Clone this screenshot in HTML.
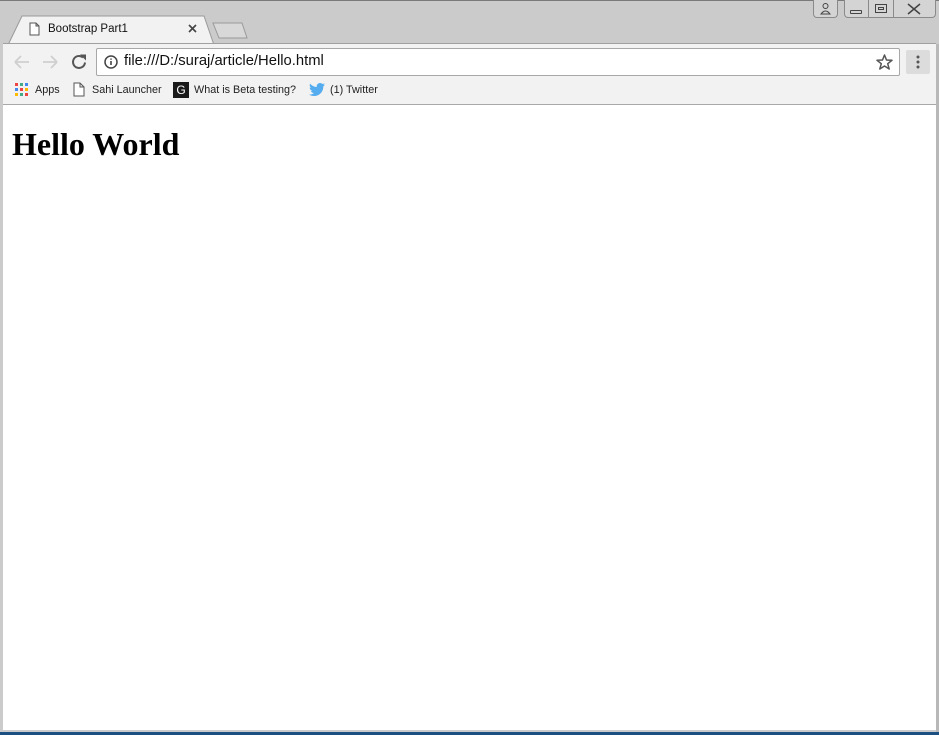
<!DOCTYPE html>
<html><head><meta charset="utf-8"><style>
*{margin:0;padding:0;box-sizing:border-box}
body{width:939px;height:735px;overflow:hidden;background:#cbcbcb;position:relative;font-family:"Liberation Sans",Arial,sans-serif}
.abs{position:absolute}
#top{left:0;top:0;width:939px;height:44px;background:#cbcbcb;border-top:1px solid #7a7a7a}
#toolbar{left:3px;top:43px;width:933px;height:62px;background:#f2f2f2;border-top:1px solid #a0a0a0}
#content{left:3px;top:104px;width:933px;height:626px;background:#fff;border-top:1px solid #a8a8a8}
#bottom{left:0;top:732px;width:939px;height:3px;background:#1c4f82}
h1{position:absolute;left:12px;top:126px;font-family:"Liberation Serif",serif;font-size:32px;font-weight:bold;color:#000}
.ctrl{top:0;height:18px;border:1px solid #8a8a8a;border-top:none;background:#d4d4d4;border-radius:0 0 4px 4px}
.bm{top:84px;font-size:10.8px;color:#222}
</style></head><body>
<div id="top" class="abs"></div>
<svg class="abs" style="left:0;top:0" width="260" height="46">
<path d="M8 45 L22 16 L204 16 L214 45 Z" fill="#f2f2f2" stroke="#9a9a9a"/>
<path d="M213 23 L242 23 L247 38 L219 38 Z" fill="#d8d8d8" stroke="#9a9a9a"/>
<path d="M30 23 h6 l3 3 v9 h-9 z M36 23 v3 h3" fill="#fff" stroke="#555" stroke-width="1"/>
<path d="M189 25 l7 7 M196 25 l-7 7" stroke="#444" stroke-width="1.6"/>
</svg>
<div class="abs" style="left:48px;top:23px;font-size:11.5px;color:#111">Bootstrap Part1</div>
<div class="abs ctrl" style="left:813px;width:25px"></div>
<svg class="abs" style="left:813px;top:0" width="25" height="18"><circle cx="12.5" cy="6" r="2.5" fill="none" stroke="#444"/><path d="M8 14 q4.5-6 9 0 z" fill="none" stroke="#444"/></svg>
<div class="abs ctrl" style="left:844px;width:25px;border-radius:0 0 0 4px"></div>
<div class="abs ctrl" style="left:868px;width:26px;border-radius:0"></div>
<div class="abs ctrl" style="left:893px;width:43px;border-radius:0 0 4px 0"></div>
<div class="abs" style="left:850px;top:10px;width:12px;height:4px;border:1px solid #444;border-radius:1px"></div>
<div class="abs" style="left:875px;top:4px;width:12px;height:9px;border:1px solid #444"></div>
<div class="abs" style="left:878px;top:7px;width:6px;height:3px;border:1px solid #444"></div>
<svg class="abs" style="left:906px;top:3px" width="16" height="12"><path d="M2 1 l12 10 M14 1 l-12 10" stroke="#444" stroke-width="1.5"/></svg>
<div id="toolbar" class="abs"></div>
<svg class="abs" style="left:10px;top:52px" width="80" height="20">
<path d="M5 10 h14 M5 10 l6-6 M5 10 l6 6" stroke="#cfcfcf" stroke-width="1.8" fill="none"/>
<path d="M33 10 h14 M47 10 l-6-6 M47 10 l-6 6" stroke="#cfcfcf" stroke-width="1.8" fill="none"/>
<path d="M73 5.5 a6 6 0 1 0 2 5" stroke="#555" stroke-width="2" fill="none"/><path d="M70 2.5 l6 0 0 6z" fill="#555"/>
</svg>
<div class="abs" style="left:96px;top:48px;width:804px;height:28px;background:#fff;border:1px solid #a8a8a8;border-radius:2px"></div>
<svg class="abs" style="left:103px;top:54px" width="16" height="16"><circle cx="8" cy="8" r="6" fill="none" stroke="#444" stroke-width="1.5"/><path d="M8 7v4M8 4.5v1.2" stroke="#444" stroke-width="1.6"/></svg>
<div class="abs" style="left:124px;top:53px;font-size:14.8px;color:#111">file:///D:/suraj/article/Hello.html</div>
<svg class="abs" style="left:876px;top:54px" width="17" height="16"><path d="M8.5 1 L10.5 6 L16 6.3 L11.7 9.7 L13.2 15 L8.5 12 L3.8 15 L5.3 9.7 L1 6.3 L6.5 6 Z" fill="none" stroke="#555" stroke-width="1.5" stroke-linejoin="round"/></svg>
<div class="abs" style="left:906px;top:50px;width:24px;height:24px;background:#dcdcdc;border-radius:2px"></div>
<svg class="abs" style="left:906px;top:50px" width="24" height="24"><circle cx="12" cy="7" r="1.5" fill="#555"/><circle cx="12" cy="12" r="1.5" fill="#555"/><circle cx="12" cy="17" r="1.5" fill="#555"/></svg>
<svg class="abs" style="left:15px;top:83px" width="13" height="13">
<rect x="0" y="0" width="3" height="3" fill="#e44"/><rect x="5" y="0" width="3" height="3" fill="#4a8"/><rect x="10" y="0" width="3" height="3" fill="#48e"/>
<rect x="0" y="5" width="3" height="3" fill="#48e"/><rect x="5" y="5" width="3" height="3" fill="#e44"/><rect x="10" y="5" width="3" height="3" fill="#fb0"/>
<rect x="0" y="10" width="3" height="3" fill="#fb0"/><rect x="5" y="10" width="3" height="3" fill="#4a8"/><rect x="10" y="10" width="3" height="3" fill="#e44"/></svg>
<div class="abs bm" style="left:35px">Apps</div>
<svg class="abs" style="left:73px;top:82px" width="12" height="15"><path d="M1 1 h6 l4 4 v9 h-10 z M7 1 v4 h4" fill="#fff" stroke="#555"/></svg>
<div class="abs bm" style="left:92px">Sahi Launcher</div>
<div class="abs" style="left:173px;top:82px;width:16px;height:16px;background:#1a1a1a;color:#fff;font-size:12px;text-align:center;line-height:16px">G</div>
<div class="abs bm" style="left:194px">What is Beta testing?</div>
<svg class="abs" style="left:309px;top:83px" width="16" height="13"><path d="M16 1.5c-.6.3-1.2.4-1.9.5.7-.4 1.2-1 1.4-1.8-.6.4-1.3.6-2.1.8C12.8.4 12 0 11 0 9.2 0 7.7 1.5 7.700 3.3c0 .3 0 .5.1.7C5.1 3.9 2.7 2.6 1.1.6.8 1.1.7 1.6.7 2.2c0 1.1.6 2.1 1.5 2.7-.5 0-1-.2-1.5-.4 0 1.600 1.1 2.9 2.6 3.2-.5.1-1 .2-1.5.1.4 1.3 1.6 2.3 3.1 2.3C3.8 11 2.1 11.6.8 11.6H0c1.5.9 3.2 1.4 5 1.4 6 0 9.3-5 9.3-9.3v-.4c.7-.5 1.2-1.1 1.7-1.8z" fill="#55acee"/></svg>
<div class="abs bm" style="left:330px">(1) Twitter</div>
<div id="content" class="abs"></div>
<div class="abs" style="left:936px;top:44px;width:3px;height:688px;background:#b8b8b8"></div>
<div id="bottom" class="abs"></div>
<h1>Hello World</h1>
</body></html>
